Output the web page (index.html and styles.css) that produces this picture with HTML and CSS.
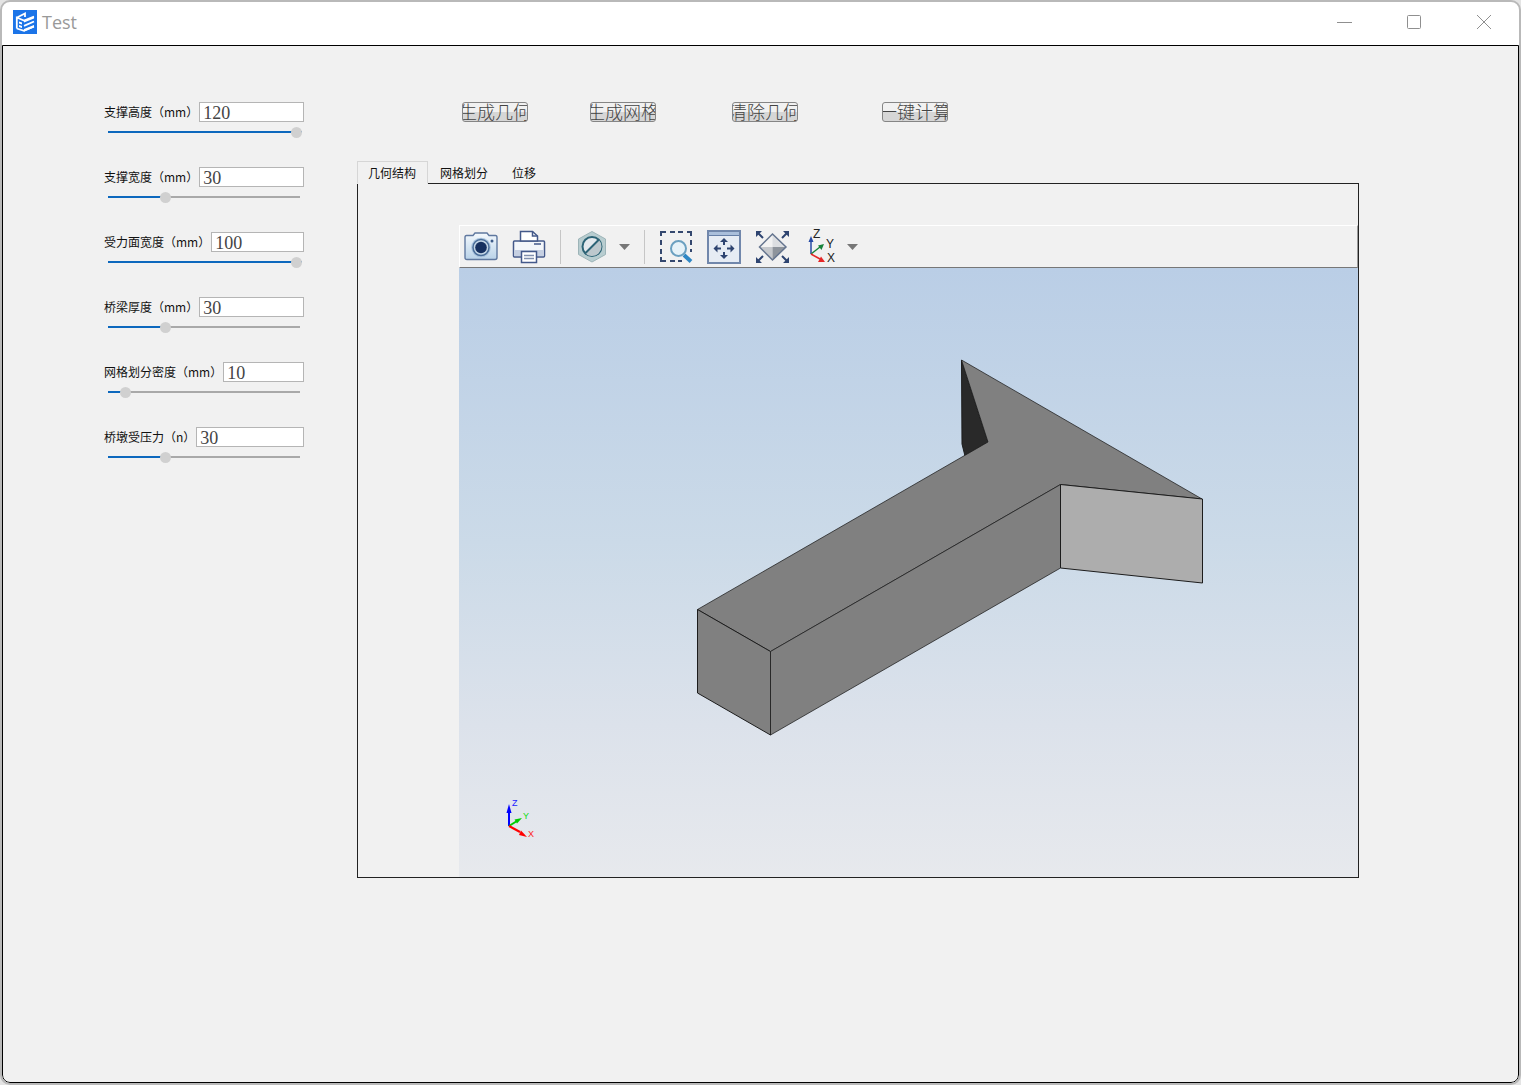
FILE: index.html
```html
<!DOCTYPE html>
<html lang="zh-CN">
<head>
<meta charset="utf-8">
<title>Test</title>
<link rel="stylesheet" href="styles.css">
</head>
<body>
<div class="window">
  <header class="titlebar">
    <svg class="logo" viewBox="0 0 24 24" aria-hidden="true">
      <rect width="24" height="24" fill="#1b74e8"/>
      <path d="M3.800 18.500V7.500L11 10.500 21 6.500M4 7.500 12 3.500V7M3.800 18.500 11 20.800 21 16.500M11 15.800l10-4.300" fill="none" stroke="#fff" stroke-width="1.800"/>
      <path d="M11 10.500 21 6.500v2L11 12.500zM11 19l10-4v2.500l-10 4zM6 11.500l3 1v2l-3-1zM6 15l3 1v2l-3-1z" fill="#fff"/>
    </svg>
    <h1 class="title">Test</h1>
    <div class="window-controls">
      <button type="button" aria-label="最小化"><svg viewBox="0 0 16 16"><path d="M1 8.500h15"/></svg></button>
      <button type="button" aria-label="最大化"><svg viewBox="0 0 16 16"><rect x="1.500" y="1.500" width="13" height="13" rx="1"/></svg></button>
      <button type="button" aria-label="关闭"><svg viewBox="0 0 16 16"><path d="M1 1l14 14M15 1 1 15"/></svg></button>
    </div>
  </header>

  <main class="content">
    <form class="params">
      <div class="param">
        <div class="param-row"><label for="p1">支撑高度（mm）</label><input id="p1" type="text" value="120"></div>
        <input type="range" aria-label="支撑高度" min="0" max="120" value="120" style="--fill:100%">
      </div>
      <div class="param">
        <div class="param-row"><label for="p2">支撑宽度（mm）</label><input id="p2" type="text" value="30"></div>
        <input type="range" aria-label="支撑宽度" min="4" max="96" value="30" style="--fill:28%">
      </div>
      <div class="param">
        <div class="param-row"><label for="p3">受力面宽度（mm）</label><input id="p3" type="text" value="100"></div>
        <input type="range" aria-label="受力面宽度" min="0" max="100" value="100" style="--fill:100%">
      </div>
      <div class="param">
        <div class="param-row"><label for="p4">桥梁厚度（mm）</label><input id="p4" type="text" value="30"></div>
        <input type="range" aria-label="桥梁厚度" min="4" max="96" value="30" style="--fill:28%">
      </div>
      <div class="param">
        <div class="param-row"><label for="p5">网格划分密度（mm）</label><input id="p5" type="text" value="10"></div>
        <input type="range" aria-label="网格划分密度" min="4" max="96" value="10" style="--fill:7%">
      </div>
      <div class="param">
        <div class="param-row"><label for="p6">桥墩受压力（n）</label><input id="p6" type="text" value="30"></div>
        <input type="range" aria-label="桥墩受压力" min="4" max="96" value="30" style="--fill:28%">
      </div>
    </form>

    <section class="workspace">
      <div class="actions">
        <button type="button" class="action"><span>生成几何</span></button>
        <button type="button" class="action mesh"><span>生成网格</span></button>
        <button type="button" class="action clear"><span>清除几何</span></button>
        <button type="button" class="action compute"><span>一键计算</span></button>
      </div>

      <div class="tabs" role="tablist">
        <button type="button" class="tab active" role="tab" aria-selected="true">几何结构</button>
        <button type="button" class="tab" role="tab" aria-selected="false">网格划分</button>
        <button type="button" class="tab" role="tab" aria-selected="false">位移</button>
      </div>

      <div class="panel" role="tabpanel">
        <div class="viewer">
          <div class="toolbar">
            <button type="button" class="tool" aria-label="截图">
              <svg viewBox="0 0 34 34">
                <defs><linearGradient id="cam" x2="0" y2="1"><stop stop-color="#f4f9fd"/><stop offset="1" stop-color="#b9d2e8"/></linearGradient></defs>
                <path d="M2.500 5.500H9l2-2.500h12l2 2.500h6.500q1.500 0 1.500 2v20q0 2-2 2h-28q-2 0-2-2v-20q0-2 1.500-2z" fill="url(#cam)" stroke="#5f789f" stroke-width="1.400"/>
                <circle cx="17" cy="17.500" r="9.800" fill="#a9c3dd"/>
                <circle cx="17" cy="17.500" r="8" fill="#c4d6e6" stroke="#4a6d98" stroke-width="1.500"/>
                <circle cx="17" cy="17.500" r="5.800" fill="#16305f"/>
                <circle cx="28" cy="11" r="1.500" fill="#3c5a88"/>
              </svg>
            </button>
            <button type="button" class="tool" aria-label="打印">
              <svg viewBox="0 0 34 34" stroke="#44598a" stroke-width="1.500">
                <rect x="1.500" y="11" width="31" height="16" rx="1" fill="#f3f6fa"/>
                <path d="M2.200 20h29.600v6H2.200z" fill="#c6d0e2" stroke="none"/>
                <path d="M8.500 11V1.500h12l5 4.500v5z" fill="#fff"/>
                <path d="M20.500 1.500V6h5M22 14h7" fill="none"/>
                <path d="M9.500 21.500h15v11h-15z" fill="#fff"/>
                <path d="M12 25.500h10M12 28.500h10" stroke="#8190ae"/>
              </svg>
            </button>
            <span class="separator"></span>
            <div class="tool-group">
              <button type="button" class="tool" aria-label="透明度">
                <svg viewBox="0 0 34 34">
                  <path d="M17 1.500 30.500 9v15.500L17 32 3.500 24.500V9z" fill="#b8cdd0" stroke="#9db4b8"/>
                  <circle cx="17" cy="16.500" r="9.500" fill="#e4e9ed" stroke="#2d6476" stroke-width="2"/>
                  <path d="M24 10a9 9 0 0 1-14 13z" fill="#bdc8cd"/>
                  <path d="M24 9.500 10 23.500" stroke="#2d6476" stroke-width="2"/>
                </svg>
              </button>
              <button type="button" class="caret" aria-label="透明度选项"><svg viewBox="0 0 11 8"><path d="M0 1h11L5.500 7z" fill="#777"/></svg></button>
            </div>
            <span class="separator"></span>
            <button type="button" class="tool" aria-label="框选缩放">
              <svg viewBox="0 0 34 34" fill="none">
                <path d="M2 6V2h5M11 2h5M19 2h5M28 2h4v4M32 10v5M32 19v3M2 10v5M2 19v5M2 27v4h5M11 31h5M19 31h4" stroke="#34486f" stroke-width="2"/>
                <path d="m25 25 7 6.500" stroke="#2f87c4" stroke-width="4"/>
                <circle cx="19.500" cy="18.500" r="7.500" fill="#e6f2f8" stroke="#6ba0c0" stroke-width="2"/>
              </svg>
            </button>
            <button type="button" class="tool" aria-label="平移">
              <svg viewBox="0 0 34 34">
                <rect x="1" y="1" width="32" height="32" fill="#e6ecf4" stroke="#7187ab" stroke-width="2"/>
                <path d="M2 2h30v3H2z" fill="#aabfdb"/>
                <path d="M2 5.500h30" stroke="#667fa7"/>
                <path d="M17 11v4M17 22v4M10 18.500h4M20 18.500h4" stroke="#2e4470" stroke-width="2"/>
                <path d="M17 8l4 4h-8zM17 29l-4-4h8zM6.500 18.500l4-4v8zM27.500 18.500l-4-4v8z" fill="#2e4470"/>
              </svg>
            </button>
            <button type="button" class="tool" aria-label="适合窗口">
              <svg viewBox="0 0 34 34">
                <path d="M17.500 4 31 17 17.500 30 4.500 17z" fill="#f2f2f2"/>
                <path d="M4.500 17h13v13z" fill="#c5c8cc"/><path d="M31 17H17.500v13z" fill="#8e949c"/><path d="M17.500 4 31 17H17.500z" fill="#dcdee1"/>
                <path d="M17.500 4 31 17 17.500 30 4.500 17z" fill="none" stroke="#65758f" stroke-width="1.500"/>
                <path d="m3 3 5 5M32 3l-5 5M3 31l5-5M32 31l-5-5" stroke="#2e4470" stroke-width="2"/>
                <path d="M1 1h6L1 7zM34 1h-6l6 6zM1 33h6l-6-6zM34 33h-6l6-6z" fill="#2e4470"/>
              </svg>
            </button>
            <div class="tool-group">
              <button type="button" class="tool" aria-label="视图方向">
                <svg class="axes-icon" viewBox="0 0 34 34">
                  <path d="M8 24V10" stroke="#264aa5" stroke-width="1.500"/><path d="M8 6l2.500 6h-5z" fill="#264aa5"/>
                  <path d="m8 24 9-7" stroke="#16833b" stroke-width="1.500"/><path d="m21 14-2.500 6-3.500-4.500z" fill="#16833b"/>
                  <path d="m8 24 9 5" stroke="#e52727" stroke-width="1.500"/><path d="m22 32-7 0 3-5.500z" fill="#e52727"/>
                  <text x="10" y="8">Z</text><text x="23" y="18">Y</text><text x="24" y="32">X</text>
                </svg>
              </button>
              <button type="button" class="caret" aria-label="视图方向选项"><svg viewBox="0 0 11 8"><path d="M0 1h11L5.500 7z" fill="#777"/></svg></button>
            </div>
          </div>

          <svg class="scene" viewBox="459 268 899 609" role="img" aria-label="几何结构">
            <g stroke="#1c1c1c" stroke-width="1" stroke-linejoin="round">
              <path d="M961.500 360 988 442 965 456 962 444z" fill="#292929"/>
              <path d="M961.500 360 1202 499 1060.500 484.500 770.500 651.500 697.500 609.500 988 442z" fill="#808080" stroke-opacity=".75"/>
              <path d="M697.500 609.500 770.500 651.500V735L697.500 693z" fill="#808080"/>
              <path d="M770.500 651.500 1060.500 484.500V568L770.500 735z" fill="#808080" stroke-opacity=".75"/>
              <path d="M1060.500 484.500 1202.500 499V583L1060.500 568z" fill="#adadad"/>
            </g>
            <g class="triad">
              <path d="M509 826V810" stroke="#00f" stroke-width="2"/><path d="m509 804 2.500 9h-5z" fill="#00f"/>
              <path d="m509 826 8-5" stroke="#0c0" stroke-width="2"/><path d="m522 818-5 5.500-2.500-4z" fill="#0c0"/>
              <path d="m509 826 11 6" stroke="red" stroke-width="2"/><path d="m527 837-8-2 2-4.500z" fill="red"/>
              <text x="512" y="806" fill="#22f">Z</text><text x="523" y="819" fill="#1d1">Y</text><text x="528" y="837" fill="#f22">X</text>
            </g>
          </svg>
        </div>
      </div>
    </section>
  </main>
</div>
</body>
</html>
```
FILE: styles.css
```css
* {
  box-sizing: border-box;
}

body {
  margin: 0;
  background: #e4e4e4;
  font: 12px/16px "Noto Sans CJK SC", sans-serif;
  color: #111;
}

button {
  margin: 0;
  padding: 0;
  border: 0;
  background: none;
  font: inherit;
  color: inherit;
}

svg {
  display: block;
}

.window {
  display: flex;
  flex-direction: column;
  min-height: 100vh;
  border: 2px solid #b9b9b9;
  border-radius: 10px;
  background: #fff;
  overflow: hidden;
}

.titlebar {
  display: flex;
  align-items: center;
  height: 43px;
  padding: 0 27px 4px 11px;
}

.logo {
  width: 24px;
  height: 24px;
}

.title {
  margin: 0 0 0 5px;
  font: 400 18px/24px "Open Sans", sans-serif;
  color: #999;
}

.window-controls {
  display: flex;
  gap: 54px;
  margin-left: auto;
}

.window-controls svg {
  width: 16px;
  height: 16px;
  fill: none;
  stroke: #8f8f8f;
}

.content {
  flex: 1;
  display: flex;
  align-items: flex-start;
  gap: 53px;
  padding: 56px 159px 204px 101px;
  border: 1px solid #000;
  border-radius: 0 0 8px 8px;
  background: #f1f1f1;
}

.params {
  flex: none;
  display: grid;
  grid-template-columns: minmax(0, 1fr);
  gap: 29px;
  width: 200px;
}

.param {
  height: 36px;
}

.param-row {
  display: flex;
  height: 20px;
}

.param-row label {
  flex: none;
  margin-right: 1px;
  line-height: 20px;
}

.param-row input {
  flex: 1;
  width: 0;
  min-width: 0;
  padding: 2px 3px 0;
  border: 1px solid #b5b5b5;
  background: #fff;
  font: 18px/18px "Liberation Serif", serif;
  color: #444;
}

.param input[type="range"] {
  display: block;
  appearance: none;
  width: 194px;
  height: 12px;
  margin: 4px 0 0 4px;
  background:
    linear-gradient(#0c68bd, #0c68bd) 0 5px / var(--fill) 2px no-repeat,
    linear-gradient(#a9a9a9, #a9a9a9) 0 5px / 192px 2px no-repeat;
}

.param input[type="range"]::-webkit-slider-thumb {
  appearance: none;
  width: 11px;
  height: 11px;
  border-radius: 50%;
  background: #d0d0d0;
}

.workspace {
  flex: 1;
  min-width: 0;
}

.actions {
  display: flex;
  padding-left: 105px;
}

.action {
  display: flex;
  flex: none;
  justify-content: center;
  align-items: center;
  width: 66px;
  height: 20px;
  padding-bottom: 2px;
  border: 1px solid #858585;
  border-radius: 3px;
  background: linear-gradient(#f1f1f1 50%, #d6d6d6 50%);
  font-size: 18px;
  font-weight: 300;
  line-height: 18px;
  color: #444;
  white-space: nowrap;
  overflow: hidden;
}

.mesh {
  margin-left: 62px;
}

.clear {
  margin-left: 76px;
}

.compute {
  margin-left: 84px;
}

.tabs {
  display: flex;
  margin-top: 39px;
}

.tab {
  height: 22px;
  padding: 1px 12px 0;
}

.tab.active {
  position: relative;
  height: 23px;
  margin-bottom: -1px;
  padding: 0 11px 0 10px;
  border: 1px solid #d6d6d6;
  border-bottom-color: #f1f1f1;
  background: #f1f1f1;
}

.panel {
  padding: 41px 0 0 101px;
  border: 1px solid #222;
}

.toolbar {
  display: flex;
  align-items: center;
  gap: 14px;
  height: 43px;
  padding-left: 4px;
  border: 1px solid #fff;
  border-right-color: #999;
  border-bottom-color: #777;
}

.tool svg {
  width: 34px;
  height: 34px;
}

.tool-group {
  display: flex;
  align-items: center;
  gap: 10px;
}

.caret svg {
  width: 11px;
  height: 8px;
}

.separator {
  width: 1px;
  height: 34px;
  background: #c6c6c6;
}

.axes-icon {
  overflow: visible;
  font: 12px "Liberation Sans", sans-serif;
  fill: #222;
}

.scene {
  width: 100%;
  background: linear-gradient(#bacee6, #cbdae8 45%, #dce2eb 75%, #e7e9ed);
}

.triad {
  font: 9px "Liberation Sans", sans-serif;
}
```
